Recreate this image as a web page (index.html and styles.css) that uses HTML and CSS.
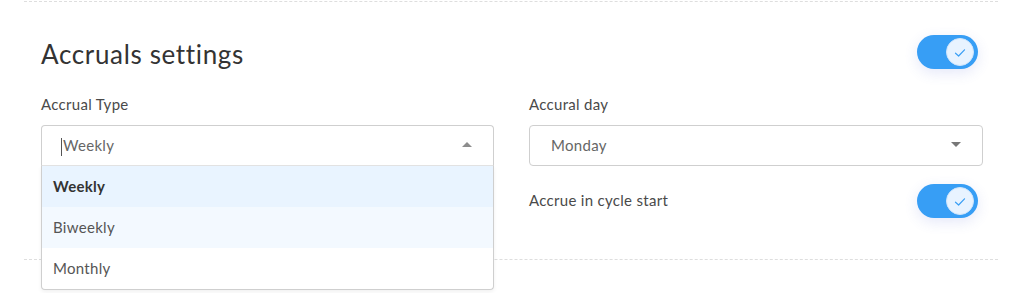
FILE: index.html
```html
<!DOCTYPE html>
<html lang="en">
<head>
<meta charset="utf-8">
<title>Accruals settings</title>
<link rel="stylesheet" href="styles.css">
</head>
<body>
<section class="settings">
  <div class="settings-head">
    <h2 class="settings-title">Accruals settings</h2>
    <span class="toggle">
      <span class="toggle-knob">
        <svg viewBox="0 0 12 10" width="12" height="10"><path d="M1.5 5.2 L4.6 8 L10.5 1.8" fill="none" stroke="#3a9ff5" stroke-width="1.2" stroke-linecap="round" stroke-linejoin="round"/></svg>
      </span>
    </span>
  </div>
  <div class="settings-grid">
    <div class="field">
      <div class="field-label">Accrual Type</div>
      <div class="select is-open">
        <div class="select-value"><span class="text-cursor"></span>Weekly<span class="select-arrow up"></span></div>
        <ul class="select-menu">
          <li class="select-option is-selected">Weekly</li>
          <li class="select-option is-hover">Biweekly</li>
          <li class="select-option">Monthly</li>
        </ul>
      </div>
    </div>
    <div class="field">
      <div class="field-label">Accural day</div>
      <div class="select">
        <div class="select-value pad">Monday<span class="select-arrow down"></span></div>
      </div>
      <div class="switch-row">
        <span class="switch-label">Accrue in cycle start</span>
        <span class="toggle">
          <span class="toggle-knob">
            <svg viewBox="0 0 12 10" width="12" height="10"><path d="M1.5 5.2 L4.6 8 L10.5 1.8" fill="none" stroke="#3a9ff5" stroke-width="1.2" stroke-linecap="round" stroke-linejoin="round"/></svg>
          </span>
        </span>
      </div>
    </div>
  </div>
</section>
</body>
</html>
```

FILE: styles.css
```css
* { box-sizing: border-box; }

html, body {
  margin: 0;
  padding: 0;
  background: #ffffff;
}

body {
  font-family: "Lato", "Open Sans", sans-serif;
  color: #4a4a4a;
  width: 1024px;
  height: 293px;
  overflow: hidden;
}

.settings {
  margin: 1px 26px 0 24px;
  border-top: 1px dashed #dedede;
  border-bottom: 1px dashed #dedede;
  padding: 33px 20px 41px 17px;
}

.settings-head {
  display: flex;
  align-items: center;
  justify-content: space-between;
  height: 34px;
}

.settings-title {
  margin: 3px 0 0;
  font-size: 26px;
  line-height: 34px;
  font-weight: 400;
  color: #333333;
  letter-spacing: 0.65px;
}

.toggle {
  display: inline-flex;
  align-items: center;
  justify-content: flex-end;
  width: 61px;
  height: 34px;
  padding: 3px 4px;
  border-radius: 17px;
  background: #379ef5;
  box-shadow: 0 4px 14px rgba(70, 90, 210, 0.14);
  flex: none;
}

.toggle-knob {
  width: 28px;
  height: 28px;
  border-radius: 50%;
  background: #e8f3ff;
  border: 1px solid #cfe5fc;
  display: flex;
  align-items: center;
  justify-content: center;
}

.toggle-knob svg { display: block; margin-top: 1px; }

.settings-grid {
  display: grid;
  grid-template-columns: 453px 454px;
  column-gap: 35px;
  margin-top: 27px;
}

.field { display: flex; flex-direction: column; }

.field-label {
  font-size: 15px;
  line-height: 18px;
  color: #4a4a4a;
  letter-spacing: 0.3px;
  margin: -1px 0 12px;
}

.select {
  position: relative;
  border: 1px solid #cfcfcf;
  border-radius: 4px;
  background: #ffffff;
}

.select.is-open {
  border-bottom-left-radius: 0;
  border-bottom-right-radius: 0;
  border-bottom-color: #e3e3e3;
}

.select-value {
  display: flex;
  align-items: center;
  height: 39px;
  padding: 0 21px 2px 19px;
  font-size: 15px;
  letter-spacing: 0.3px;
  color: #666666;
}

.select-value.pad { padding-left: 21px; }

.text-cursor {
  display: inline-block;
  width: 1px;
  height: 18px;
  background: #555;
  margin: 4px 1px 0 0;
}

.select-arrow {
  margin-left: auto;
  width: 0;
  height: 0;
  border-left: 5px solid transparent;
  border-right: 5px solid transparent;
}

.select-arrow.up {
  border-bottom: 5px solid #8d8d8d;
}

.select-arrow.down {
  border-top: 5px solid #777777;
}

.select-menu {
  position: absolute;
  left: -1px;
  right: -1px;
  top: 100%;
  margin: 1px 0 0;
  padding: 0;
  list-style: none;
  border: 1px solid #cfcfcf;
  border-top: none;
  border-radius: 0 0 4px 4px;
  background: #ffffff;
  box-shadow: 0 2px 4px rgba(0, 0, 0, 0.06);
  overflow: hidden;
  z-index: 2;
}

.select-option {
  height: 41px;
  display: flex;
  align-items: center;
  padding: 0 0 2px 11px;
  font-size: 15px;
  letter-spacing: 0.3px;
  color: #555555;
}

.select-option.is-selected {
  background: #e9f4ff;
  font-weight: 700;
  color: #333333;
}

.select-option.is-hover {
  background: #f3f9ff;
}

.switch-row {
  display: flex;
  align-items: center;
  justify-content: space-between;
  margin-top: 18px;
  padding-right: 5px;
}

.switch-label {
  font-size: 15px;
  line-height: 18px;
  letter-spacing: 0.3px;
  color: #4a4a4a;
  padding-bottom: 2px;
}
```
